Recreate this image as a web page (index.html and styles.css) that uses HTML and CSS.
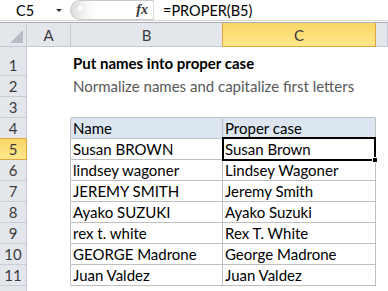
FILE: index.html
```html
<!DOCTYPE html>
<html lang="en">
<head>
    <meta charset="UTF-8">
    <title>PROPER function</title>
    <link rel="stylesheet" href="styles.css">
</head>
<body>
    <div class="formula-bar">
        <div class="name-box">C5</div>
        <div class="name-arrow"></div>
        <div class="fx-box"><span class="fx">fx</span></div>
        <div class="formula">=PROPER(B5)</div>
    </div>

    <div class="sheet">
        <!-- column headers -->
        <div class="corner"><span class="corner-tri"></span></div>
        <div class="col-head">A</div>
        <div class="col-head before-active">B</div>
        <div class="col-head active">C</div>
        <div class="col-head"></div>

        <div class="row-head">1</div>
        <div class="cell"></div>
        <div class="cell title">Put names into proper case</div>
        <div class="cell"></div>
        <div class="cell"></div>

        <div class="row-head">2</div>
        <div class="cell"></div>
        <div class="cell subtitle">Normalize names and capitalize first letters</div>
        <div class="cell"></div>
        <div class="cell"></div>

        <div class="row-head">3</div>
        <div class="cell"></div>
        <div class="cell top"></div>
        <div class="cell top"></div>
        <div class="cell"></div>

        <div class="row-head before-active">4</div>
        <div class="cell edge"></div>
        <div class="cell t th">Name</div>
        <div class="cell t th">Proper case</div>
        <div class="cell"></div>

        <div class="row-head active">5</div>
        <div class="cell edge"></div>
        <div class="cell t">Susan BROWN</div>
        <div class="cell t sel">Susan Brown<span class="handle"></span></div>
        <div class="cell"></div>

        <div class="row-head">6</div>
        <div class="cell edge"></div>
        <div class="cell t">lindsey wagoner</div>
        <div class="cell t">Lindsey Wagoner</div>
        <div class="cell"></div>

        <div class="row-head">7</div>
        <div class="cell edge"></div>
        <div class="cell t">JEREMY SMITH</div>
        <div class="cell t">Jeremy Smith</div>
        <div class="cell"></div>

        <div class="row-head">8</div>
        <div class="cell edge"></div>
        <div class="cell t">Ayako SUZUKI</div>
        <div class="cell t">Ayako Suzuki</div>
        <div class="cell"></div>

        <div class="row-head">9</div>
        <div class="cell edge"></div>
        <div class="cell t">rex t. white</div>
        <div class="cell t">Rex T. White</div>
        <div class="cell"></div>

        <div class="row-head">10</div>
        <div class="cell edge"></div>
        <div class="cell t">GEORGE Madrone</div>
        <div class="cell t">George Madrone</div>
        <div class="cell"></div>

        <div class="row-head">11</div>
        <div class="cell edge"></div>
        <div class="cell t">Juan Valdez</div>
        <div class="cell t">Juan Valdez</div>
        <div class="cell"></div>

        <div class="row-head"></div>
        <div class="cell"></div>
        <div class="cell"></div>
        <div class="cell"></div>
        <div class="cell"></div>
    </div>
</body>
</html>
```

FILE: styles.css
```css
* {
    margin: 0;
    padding: 0;
    box-sizing: border-box;
}

body {
    font-family: Lato, "Noto Sans", sans-serif;
    font-size: 15px;
    color: #000;
    background: #fff;
    overflow: hidden;
}

/* Formula bar */
.formula-bar {
    display: flex;
    align-items: center;
    height: 21px;
    border-bottom: 1px solid #d4d4d4;
    margin-bottom: 1px;
}

.name-box {
    width: 50px;
    padding-left: 16px;
    font-size: 14.5px;
}

.name-arrow {
    width: 0;
    height: 0;
    margin-left: 6px;
    border-left: 3px solid transparent;
    border-right: 3px solid transparent;
    border-top: 3px solid #333;
}

.fx-box {
    position: relative;
    display: flex;
    align-items: center;
    justify-content: flex-end;
    width: 84px;
    height: 20px;
    margin-left: 8px;
    padding-right: 5px;
    border: 1px solid #c9c9c9;
    border-right-color: #d9d9d9;
    border-radius: 10px 0 0 10px;
    background: linear-gradient(to right, #dedede, #f6f6f6 18%, #fff 30%);
}

.fx-box::before {
    content: "";
    position: absolute;
    left: 6px;
    top: 4px;
    width: 7px;
    height: 7px;
    border-radius: 50%;
    background: #fafafa;
    box-shadow: 0 0 1px #aaa;
}

.fx {
    font-family: "Liberation Serif", serif;
    font-style: italic;
    font-weight: bold;
    font-size: 14px;
    color: #333;
}

.formula {
    padding-left: 9px;
    font-size: 14.5px;
}

/* Sheet grid */
.sheet {
    display: grid;
    grid-template-columns: 27px 44px 152px 153px 1fr;
    grid-template-rows: 24px 29px repeat(10, 21px) 7px;
    border-top: 1px solid #a7aeb6;
}

.corner,
.col-head,
.row-head,
.cell {
    border-right: 1px solid #fff;
    border-bottom: 1px solid #fff;
    white-space: nowrap;
}

.corner {
    position: relative;
    background: #e3e7ec;
    border-right-color: #c3c9d0;
    border-bottom-color: #c3c9d0;
}

.corner-tri {
    position: absolute;
    right: 3px;
    bottom: 3px;
    width: 0;
    height: 0;
    border-left: 13px solid transparent;
    border-bottom: 13px solid #b7bcc3;
}

.col-head {
    display: flex;
    align-items: center;
    justify-content: center;
    background: #e3e7ec;
    color: #3b3b3b;
    border-right-color: #c3c9d0;
    border-bottom-color: #c3c9d0;
}

.row-head {
    display: flex;
    align-items: flex-end;
    justify-content: center;
    padding-bottom: 1px;
    background: #e3e7ec;
    color: #3b3b3b;
    border-right-color: #c3c9d0;
    border-bottom-color: #c9ced5;
}

.col-head.before-active {
    border-right-color: #e2a540;
}

.row-head.before-active {
    border-bottom-color: #e2a540;
}

.col-head.active,
.row-head.active {
    background: linear-gradient(#f9d565, #ffe98d);
    border-right-color: #e2a540;
    border-bottom-color: #e2a540;
}

.cell {
    display: flex;
    align-items: flex-end;
    padding: 0 0 1px 2px;
}

.title {
    font-weight: bold;
    padding-bottom: 3px;
}

.subtitle {
    color: #595959;
}

.top {
    border-bottom-color: #bfbfbf;
}

.edge {
    border-right-color: #bfbfbf;
}

.t {
    border-right-color: #bfbfbf;
    border-bottom-color: #bfbfbf;
}

.th {
    background: #dce6f1;
}

/* Active cell */
.sel {
    position: relative;
}

.sel::after {
    content: "";
    position: absolute;
    top: -2px;
    left: -1px;
    right: -1px;
    bottom: -2px;
    border: 2px solid #000;
}

.handle {
    position: absolute;
    right: -3px;
    bottom: -4px;
    width: 6px;
    height: 6px;
    background: #000;
    border: 1px solid #fff;
    z-index: 1;
}
```
